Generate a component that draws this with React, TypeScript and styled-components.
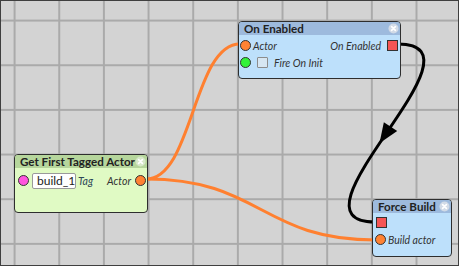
import React from "react";
import styled, { createGlobalStyle } from "styled-components";

const Global = createGlobalStyle`
  html, body { margin: 0; padding: 0; background: #d3d3d3; }
  body { font-family: Lato, "Open Sans", sans-serif; }
`;

const Canvas = styled.div`
  position: relative;
  width: 459px;
  height: 266px;
  box-sizing: border-box;
  border: 1px solid #3f3f3f;
  overflow: hidden;
  background-color: #d3d3d3;
  background-image:
    linear-gradient(to right, #aaaaaa 1.5px, transparent 1.5px),
    linear-gradient(to bottom, #aaaaaa 1.5px, transparent 1.5px);
  background-size: 44.667px 44.667px;
  background-position: 12.6px 18.6px;
`;

const Wires = styled.svg`
  position: absolute;
  left: -1px;
  top: -1px;
  width: 459px;
  height: 266px;
  pointer-events: none;
`;

type Tone = "blue" | "green";
const tones = {
  blue: { head: "#9dbadd", body: "#bde0fb", close: "#d2dbe7" },
  green: { head: "#b6d69c", body: "#e0fac4", close: "#d6e8c8" },
};

const Node = styled.div<{ $x: number; $y: number; $w: number; $h: number; $tone: Tone }>`
  position: absolute;
  left: ${(p) => p.$x - 1}px;
  top: ${(p) => p.$y - 1}px;
  width: ${(p) => p.$w}px;
  height: ${(p) => p.$h}px;
  box-sizing: border-box;
  border: 1px solid #2e2e2e;
  border-radius: 4px;
  background: ${(p) => tones[p.$tone].body};
  overflow: hidden;
  display: flex;
  flex-direction: column;
`;

const Header = styled.div<{ $tone: Tone }>`
  height: 13px;
  flex: none;
  background: ${(p) => tones[p.$tone].head};
  display: flex;
  align-items: center;
  justify-content: space-between;
  padding: 0 1px 0 5px;
  font-weight: 700;
  font-size: 11.6px;
  color: #222;
  line-height: 13px;
  white-space: nowrap;
`;

const Body = styled.div<{ $pt: number }>`
  display: flex;
  flex-direction: column;
  padding: ${(p) => p.$pt}px 1px 0 1px;
`;

const Row = styled.div<{ $h?: number }>`
  height: ${(p) => p.$h ?? 17}px;
  display: flex;
  align-items: center;
  gap: 2px;
`;

const Spacer = styled.div`
  flex: 1;
`;

const pinColors = {
  orange: "#ff8233",
  green: "#33f23a",
  pink: "#ff55dd",
};

const Pin = styled.span<{ $c: keyof typeof pinColors }>`
  width: 9px;
  height: 9px;
  flex: none;
  border-radius: 50%;
  border: 1px solid #333;
  background: ${(p) => pinColors[p.$c]};
`;

const ExecPin = styled.span`
  width: 9px;
  height: 9px;
  flex: none;
  border: 1px solid #333;
  background: #f55555;
`;

const Label = styled.span<{ $color?: string }>`
  font-style: italic;
  font-size: 10.5px;
  color: ${(p) => p.$color ?? "#333"};
  white-space: nowrap;
  line-height: 12px;
`;

const Check = styled.span`
  width: 9px;
  height: 9px;
  flex: none;
  margin: 0 4px 0 4px;
  border: 1px solid #8c8c8c;
  border-radius: 1px;
  background: #d6e6f2;
`;

const TextInput = styled.span`
  box-sizing: border-box;
  width: 44px;
  height: 16px;
  margin-left: 1px;
  padding: 0 0 0 4px;
  border: 1px solid #9a9a9a;
  border-radius: 2px;
  background: #fff;
  font-size: 12px;
  line-height: 14px;
  color: #222;
  white-space: nowrap;
`;

const CloseIcon = ({ tone }: { tone: Tone }) => (
  <svg width="11" height="11" viewBox="0 0 11 11" style={{ flex: "none" }}>
    <circle cx="5.5" cy="5.5" r="5" fill={tones[tone].close} />
    <path d="M3.6 3.6 L7.4 7.4 M7.4 3.6 L3.6 7.4" stroke="#fff" strokeWidth="1.7" strokeLinecap="round" />
  </svg>
);

const ax = 385;
const ay = 135;
const ang = (Math.atan2(267, -177) * 180) / Math.PI;

export default function App() {
  return (
    <>
      <Global />
      <Canvas>
        <Wires viewBox="0 0 459 266">
          <path d="M146 179 C193 179, 193 44, 240 44" fill="none" stroke="#ff8030" strokeWidth="3" />
          <path d="M146 179 C261 179, 261 240, 376 240" fill="none" stroke="#ff8030" strokeWidth="3" />
          <path d="M398 44 C496 44, 277 222, 375 222" fill="none" stroke="#000" strokeWidth="3" />
          <polygon
            points="10,0 -10,-8 -10,8"
            fill="#000"
            transform={`translate(${ax} ${ay}) rotate(${ang})`}
          />
        </Wires>

        <Node $x={238} $y={21} $w={163} $h={58} $tone="blue">
          <Header $tone="blue">
            <span>On Enabled</span>
            <CloseIcon tone="blue" />
          </Header>
          <Body $pt={2}>
            <Row>
              <Pin $c="orange" />
              <Label>Actor</Label>
              <Spacer />
              <Label>On Enabled</Label>
              <ExecPin style={{ marginLeft: 4, marginRight: 1 }} />
            </Row>
            <Row>
              <Pin $c="green" />
              <Check />
              <Label>Fire On Init</Label>
            </Row>
          </Body>
        </Node>

        <Node $x={14} $y={154} $w={134} $h={59} $tone="green">
          <Header $tone="green">
            <span>Get First Tagged Actor</span>
            <CloseIcon tone="green" />
          </Header>
          <Body $pt={4}>
            <Row $h={17}>
              <Pin $c="pink" style={{ marginLeft: 2 }} />
              <TextInput>build_1</TextInput>
              <Label $color="#2c4657">Tag</Label>
              <Spacer />
              <Label>Actor</Label>
              <Pin $c="orange" style={{ marginLeft: 2 }} />
            </Row>
          </Body>
        </Node>

        <Node $x={372} $y={199} $w={80} $h={58} $tone="blue">
          <Header $tone="blue">
            <span>Force Build</span>
            <CloseIcon tone="blue" />
          </Header>
          <Body $pt={1}>
            <Row>
              <ExecPin style={{ marginLeft: 2 }} />
            </Row>
            <Row>
              <Pin $c="orange" style={{ marginLeft: 1 }} />
              <Label>Build actor</Label>
            </Row>
          </Body>
        </Node>
      </Canvas>
    </>
  );
}
